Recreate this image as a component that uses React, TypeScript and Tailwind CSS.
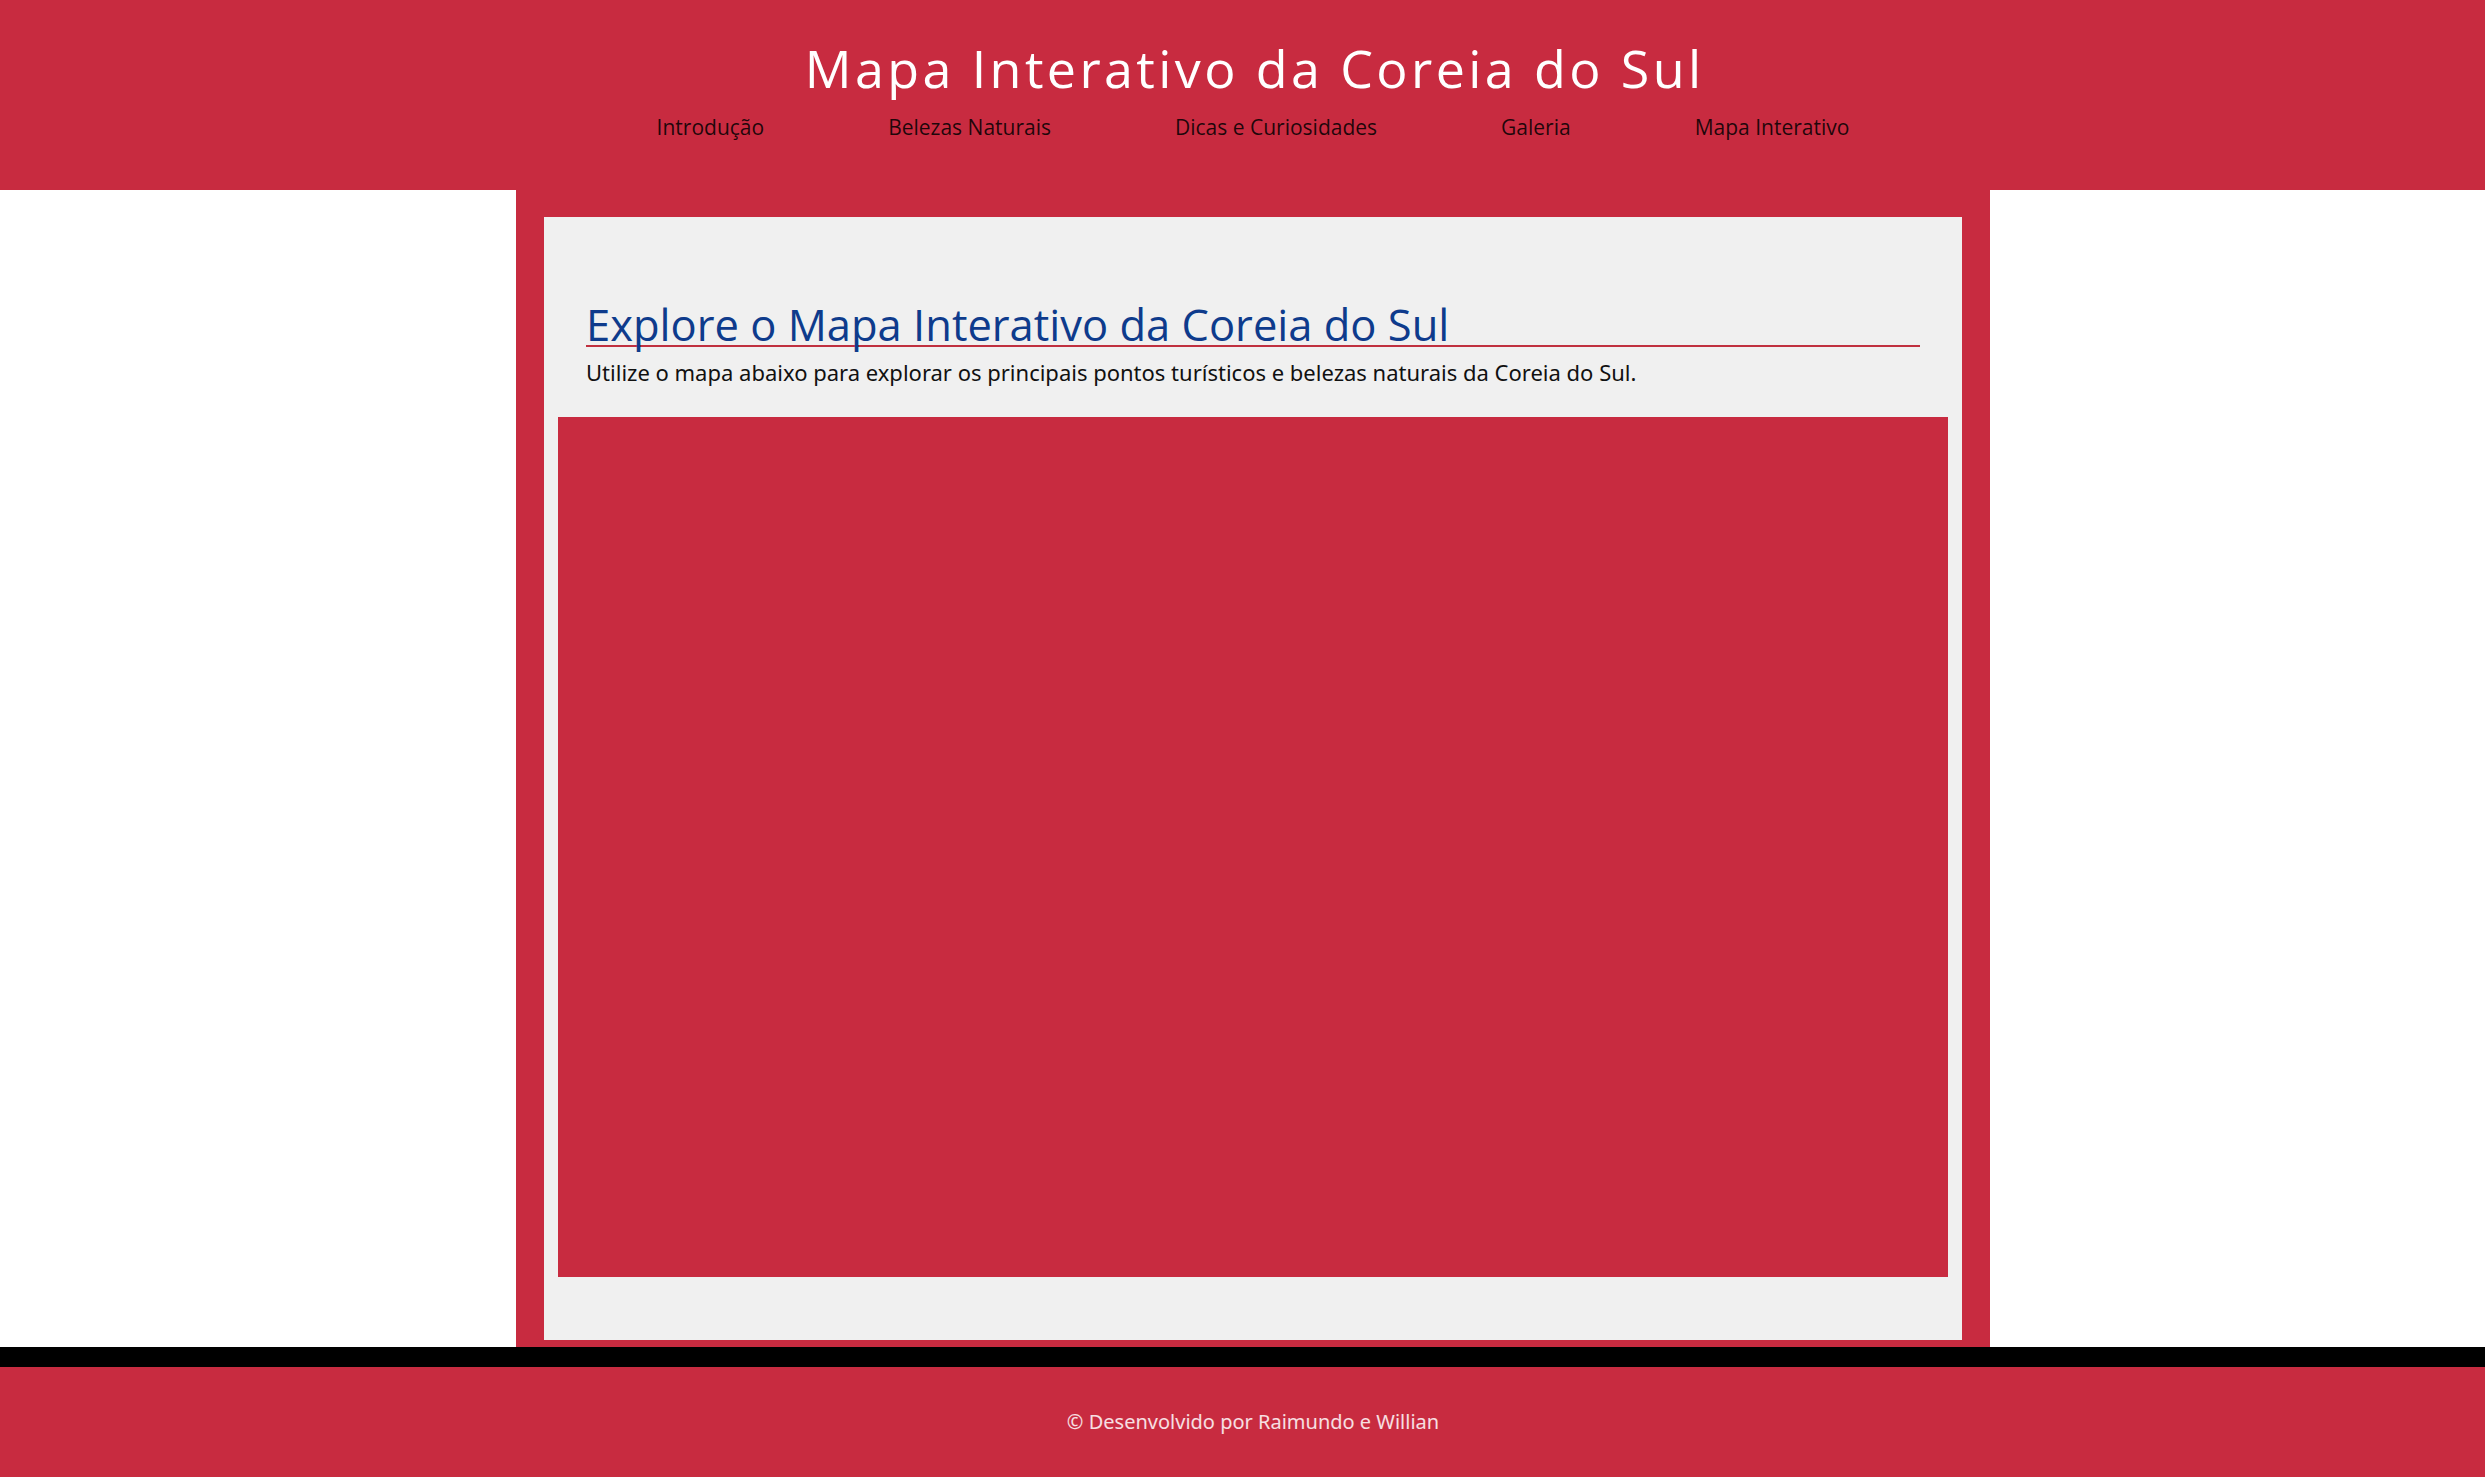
import React from "react";

const links = ["Introdução", "Belezas Naturais", "Dicas e Curiosidades", "Galeria", "Mapa Interativo"];

export default function App() {
  return (
    <div className="w-full overflow-hidden bg-white">
      <div className="w-[2506px] flex flex-col">
        <header className="h-[190px] bg-[#c82b40] flex flex-col items-center pt-[42px]">
          <h1 className="text-[52px] leading-none text-white tracking-[3.4px] font-normal pl-[3.4px]" style={{ fontFamily: '"Open Sans", sans-serif' }}>
            Mapa Interativo da Coreia do Sul
          </h1>
          <nav className="mt-[23px] flex gap-[124px]" style={{ fontFamily: '"Open Sans", sans-serif' }}>
            {links.map((l) => (
              <a key={l} className="text-[21px] leading-none text-black/85">
                {l}
              </a>
            ))}
          </nav>
        </header>
        <main className="mx-auto w-[1474px] bg-[#c82b40] pt-[27px] pb-[7px] px-[28px]">
          <section className="bg-[#f0f0f0] pt-[88px] pb-[63px] flex flex-col">
            <h2
              className="mx-[42px] text-[43.5px] leading-[40px] text-[#0e3b8c] font-normal border-b-2 border-[#c0303f]"
              style={{ fontFamily: '"Open Sans", sans-serif' }}
            >
              Explore o Mapa Interativo da Coreia do Sul
            </h2>
            <p className="mx-[42px] mt-[10px] text-[22px] leading-[30px] text-[#111]" style={{ fontFamily: '"Noto Sans", sans-serif' }}>
              Utilize o mapa abaixo para explorar os principais pontos turísticos e belezas naturais da Coreia do Sul.
            </p>
            <div className="mx-[14px] mt-[30px] h-[860px] bg-[#c82b40]" />
          </section>
        </main>
        <div className="h-[20px] bg-black" />
        <footer className="h-[110px] bg-[#c82b40] flex items-center justify-center">
          <p className="text-[20px] text-white/85" style={{ fontFamily: '"Noto Sans", sans-serif' }}>
            © Desenvolvido por Raimundo e Willian
          </p>
        </footer>
      </div>
    </div>
  );
}
